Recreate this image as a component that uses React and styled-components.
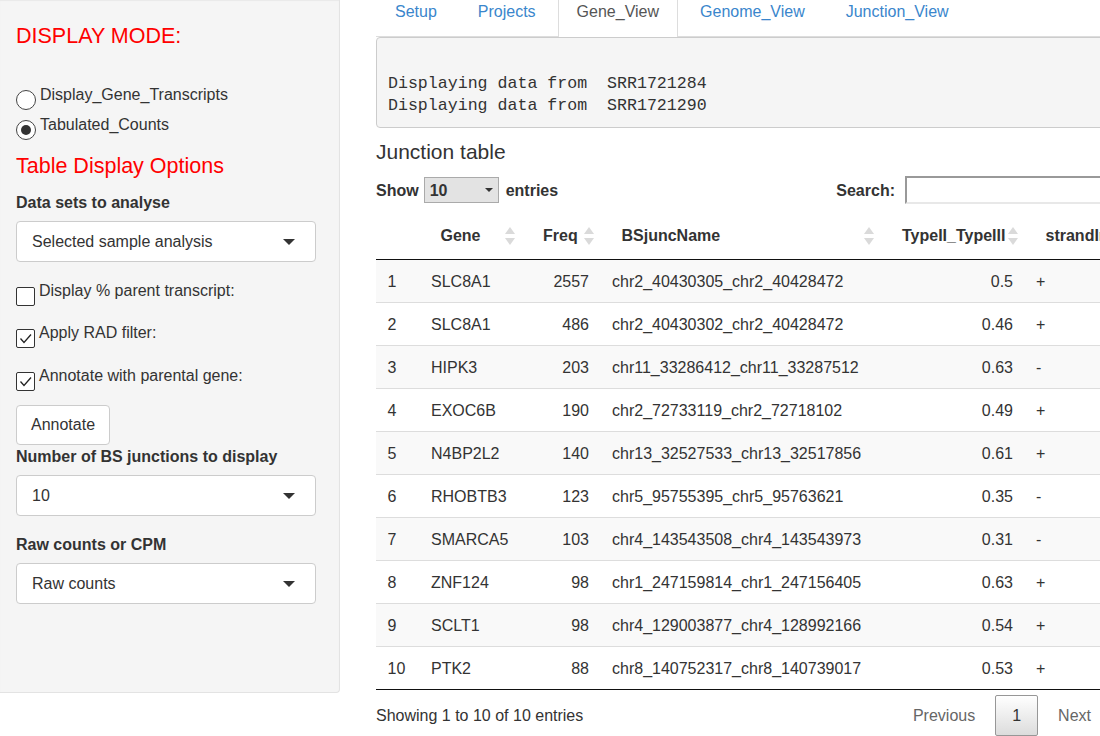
import React from 'react';
import styled, { createGlobalStyle } from 'styled-components';

const GlobalStyle = createGlobalStyle`
  * { box-sizing: border-box; }
  html, body { margin: 0; padding: 0; background: #fff; overflow: hidden; }
  body {
    font-family: "Liberation Sans", Arial, sans-serif;
    font-size: 16px;
    line-height: 23px;
    color: #333;
  }
`;

const Page = styled.div`
  display: flex;
  align-items: flex-start;
  width: 1100px;
  height: 736px;
  overflow: hidden;
`;

const Sidebar = styled.div`
  flex: 0 0 340px;
  padding: 24px 23px 88px 16px;
  background: #f5f5f5;
  border: 1px solid #e3e3e3;
  border-top: none;
  border-left: none;
  border-radius: 0 0 4px 0;
  box-shadow: inset 0 1px 1px rgba(0, 0, 0, 0.05);
`;

const RedTitle = styled.div`
  color: #ff0000;
  font-size: 21.5px;
  line-height: 24px;
  margin-top: ${({ $top }) => $top || 0}px;
`;

const OptionRow = styled.label`
  display: flex;
  align-items: flex-start;
  gap: 4px;
  height: ${({ $h }) => $h || 30}px;
  margin-top: ${({ $top }) => $top || 0}px;
`;

const RadioCircle = styled.span`
  flex: 0 0 20px;
  width: 20px;
  height: 20px;
  margin-top: 7px;
  border: 1px solid #444;
  border-radius: 50%;
  background: #fff;
  display: flex;
  align-items: center;
  justify-content: center;
  &::after {
    content: '';
    display: ${({ $on }) => ($on ? 'block' : 'none')};
    width: 10px;
    height: 10px;
    border-radius: 50%;
    background: #333;
  }
`;

const CheckBox = styled.span`
  flex: 0 0 19px;
  width: 19px;
  height: 19px;
  margin-top: 8px;
  border: 1px solid #333;
  border-radius: 2px;
  background: #fff;
  display: flex;
  align-items: center;
  justify-content: center;
`;

const FieldLabel = styled.div`
  font-weight: bold;
  margin-top: ${({ $top }) => $top || 0}px;
`;

const SelectBox = styled.div`
  display: flex;
  align-items: center;
  justify-content: space-between;
  height: 41px;
  margin-top: 7.5px;
  padding: 0 20px 0 15px;
  background: #fff;
  border: 1px solid #ccc;
  border-radius: 4px;
`;

const Button = styled.div`
  display: inline-flex;
  align-items: center;
  height: 40px;
  padding: 0 14px;
  margin-top: 18px;
  background: #fff;
  border: 1px solid #ccc;
  border-radius: 4px;
`;

const Main = styled.div`
  flex: 0 0 732px;
  width: 732px;
  min-width: 0;
  margin-left: 36px;
`;

const TabBar = styled.div`
  display: flex;
  height: 37px;
  border-bottom: 1px solid #ddd;
`;

const Tab = styled.div`
  height: 37px;
  margin-right: 3px;
  margin-bottom: -1px;
  padding: 1px 18px 0;
  line-height: 22px;
  border: 1px solid ${({ $active }) => ($active ? '#ddd' : 'transparent')};
  border-top: none;
  border-bottom: none;
  background: ${({ $active }) => ($active ? '#fff' : 'transparent')};
  color: ${({ $active }) => ($active ? '#555' : '#3a86cc')};
`;

const Output = styled.pre`
  margin: 0;
  padding: 35px 11px 10px;
  background: #f5f5f5;
  border: 1px solid #ccc;
  border-radius: 4px;
  font-family: "Liberation Mono", "Courier New", monospace;
  font-size: 16.6px;
  line-height: 22px;
  color: #333;
`;

const Heading = styled.div`
  margin-top: 12px;
  font-size: 21px;
  line-height: 24px;
`;

const Controls = styled.div`
  display: flex;
  align-items: center;
  justify-content: space-between;
  height: 28px;
  margin-top: 12px;
  font-weight: bold;
`;

const Group = styled.div`
  display: flex;
  align-items: center;
`;

const LengthSelect = styled.div`
  display: flex;
  align-items: center;
  justify-content: space-between;
  width: 75px;
  height: 26px;
  margin: 0 7px 0 5px;
  padding: 0 5px 0 5px;
  background: #e3e3e3;
  border: 1px solid #aaa;
`;

const SearchInput = styled.div`
  width: 203px;
  height: 28px;
  margin-left: 10px;
  border-top: 2px solid #999;
  border-left: 2px solid #999;
  border-bottom: 2px solid #e8e8e8;
  border-right: 2px solid #e8e8e8;
`;

const Table = styled.table`
  width: 820px;
  margin-top: 8px;
  table-layout: fixed;
  border-collapse: separate;
  border-spacing: 0;
`;

const Th = styled.th`
  position: relative;
  height: 48px;
  padding: 0 21px;
  text-align: left;
  font-weight: bold;
  white-space: nowrap;
  border-bottom: 1px solid #111;
`;

const SortIcon = styled.svg`
  position: absolute;
  right: 7px;
  top: 15px;
`;

const Row = styled.tr`
  background: ${({ $odd }) => ($odd ? '#f9f9f9' : '#fff')};
  &:last-child td { border-bottom-color: #111; }
`;

const Td = styled.td`
  height: 43px;
  padding: 0 11.5px;
  white-space: nowrap;
  text-align: ${({ $right }) => ($right ? 'right' : 'left')};
  border-bottom: 1px solid #ddd;
`;

const Footer = styled.div`
  display: flex;
  justify-content: space-between;
  align-items: flex-start;
`;

const Info = styled.div`
  padding-top: 14px;
`;

const Pager = styled.div`
  display: flex;
  padding-top: 5px;
`;

const PageButton = styled.div`
  height: 41px;
  margin-left: 3px;
  padding: 8px 16px;
  border: 1px solid ${({ $current }) => ($current ? '#979797' : 'transparent')};
  border-radius: 2px;
  color: ${({ $current }) => ($current ? '#333' : '#666')};
  background: ${({ $current }) =>
    $current ? 'linear-gradient(to bottom, #fff 0%, #dcdcdc 100%)' : 'transparent'};
`;

const Caret = ({ w = 12, h = 6 }) => (
  <svg width={w} height={h} viewBox="0 0 12 6">
    <path d="M0 0 L12 0 L6 6 Z" fill="#333" />
  </svg>
);

const Tick = () => (
  <svg width="15" height="15" viewBox="0 0 15 15">
    <path d="M2.5 7.5 L6 11.5 L13 3.5" fill="none" stroke="#222" strokeWidth="1.3" />
  </svg>
);

const Sort = () => (
  <SortIcon width="10" height="18" viewBox="0 0 10 18">
    <path d="M5 0 L10 7 L0 7 Z" fill="#dadada" />
    <path d="M0 11 L10 11 L5 18 Z" fill="#dadada" />
  </SortIcon>
);

const rows = [
  ['SLC8A1', 2557, 'chr2_40430305_chr2_40428472', '0.5', '+'],
  ['SLC8A1', 486, 'chr2_40430302_chr2_40428472', '0.46', '+'],
  ['HIPK3', 203, 'chr11_33286412_chr11_33287512', '0.63', '-'],
  ['EXOC6B', 190, 'chr2_72733119_chr2_72718102', '0.49', '+'],
  ['N4BP2L2', 140, 'chr13_32527533_chr13_32517856', '0.61', '+'],
  ['RHOBTB3', 123, 'chr5_95755395_chr5_95763621', '0.35', '-'],
  ['SMARCA5', 103, 'chr4_143543508_chr4_143543973', '0.31', '-'],
  ['ZNF124', 98, 'chr1_247159814_chr1_247156405', '0.63', '+'],
  ['SCLT1', 98, 'chr4_129003877_chr4_128992166', '0.54', '+'],
  ['PTK2', 88, 'chr8_140752317_chr8_140739017', '0.53', '+'],
];

const tabs = ['Setup', 'Projects', 'Gene_View', 'Genome_View', 'Junction_View'];

export default function App() {
  return (
    <>
      <GlobalStyle />
      <Page>
        <Sidebar>
          <RedTitle>DISPLAY MODE:</RedTitle>
          <OptionRow $top={34.5}>
            <RadioCircle />
            Display_Gene_Transcripts
          </OptionRow>
          <OptionRow>
            <RadioCircle $on />
            Tabulated_Counts
          </OptionRow>
          <RedTitle $top={11.5}>Table Display Options</RedTitle>
          <FieldLabel $top={12.5}>Data sets to analyse</FieldLabel>
          <SelectBox>
            Selected sample analysis
            <Caret />
          </SelectBox>
          <OptionRow $top={16.5} $h={23}>
            <CheckBox />
            Display % parent transcript:
          </OptionRow>
          <OptionRow $top={19} $h={23}>
            <CheckBox><Tick /></CheckBox>
            Apply RAD filter:
          </OptionRow>
          <OptionRow $top={20} $h={23}>
            <CheckBox><Tick /></CheckBox>
            Annotate with parental gene:
          </OptionRow>
          <Button>Annotate</Button>
          <FieldLabel>Number of BS junctions to display</FieldLabel>
          <SelectBox>
            10
            <Caret />
          </SelectBox>
          <FieldLabel $top={16.5}>Raw counts or CPM</FieldLabel>
          <SelectBox>
            Raw counts
            <Caret />
          </SelectBox>
        </Sidebar>

        <Main>
          <TabBar>
            {tabs.map((t) => (
              <Tab key={t} $active={t === 'Gene_View'}>{t}</Tab>
            ))}
          </TabBar>
          <Output>
            {'Displaying data from  SRR1721284\nDisplaying data from  SRR1721290'}
          </Output>
          <Heading>Junction table</Heading>
          <Controls>
            <Group>
              Show
              <LengthSelect>
                10
                <Caret w={8} h={4} />
              </LengthSelect>
              entries
            </Group>
            <Group>
              Search:
              <SearchInput />
            </Group>
          </Controls>
          <Table>
            <colgroup>
              <col style={{ width: 43.5 }} />
              <col style={{ width: 102.5 }} />
              <col style={{ width: 78.5 }} />
              <col style={{ width: 280.5 }} />
              <col style={{ width: 143.5 }} />
              <col />
            </colgroup>
            <thead>
              <tr>
                <Th />
                <Th>Gene<Sort /></Th>
                <Th>Freq<Sort /></Th>
                <Th>BSjuncName<Sort /></Th>
                <Th>TypeII_TypeIII<Sort /></Th>
                <Th>strandInfo<Sort /></Th>
              </tr>
            </thead>
            <tbody>
              {rows.map((r, i) => (
                <Row key={i} $odd={i % 2 === 0}>
                  <Td>{i + 1}</Td>
                  <Td>{r[0]}</Td>
                  <Td $right>{r[1]}</Td>
                  <Td>{r[2]}</Td>
                  <Td $right>{r[3]}</Td>
                  <Td>{r[4]}</Td>
                </Row>
              ))}
            </tbody>
          </Table>
          <Footer>
            <Info>Showing 1 to 10 of 10 entries</Info>
            <Pager>
              <PageButton>Previous</PageButton>
              <PageButton $current>1</PageButton>
              <PageButton>Next</PageButton>
            </Pager>
          </Footer>
        </Main>
      </Page>
    </>
  );
}
